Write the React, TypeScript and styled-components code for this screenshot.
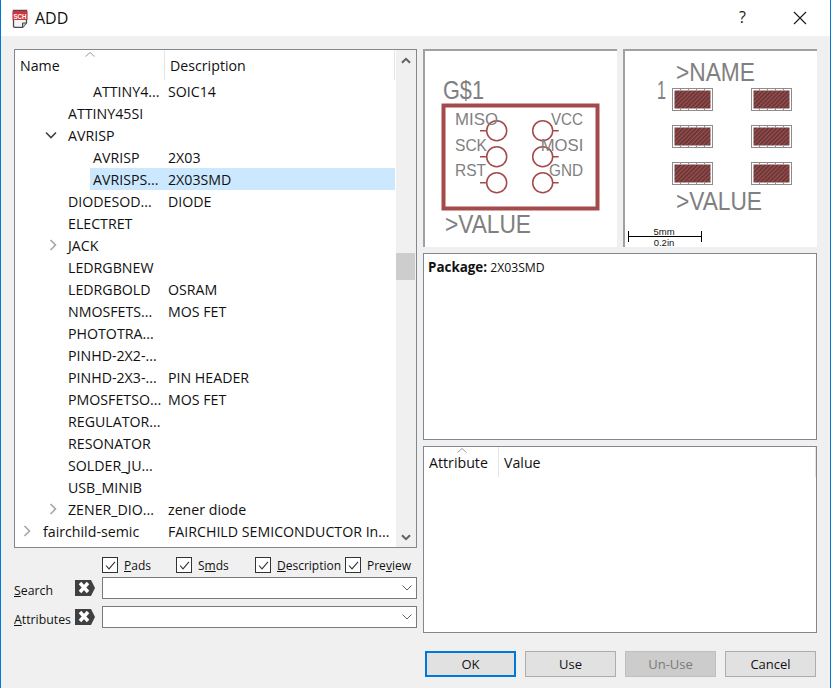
import styled, { createGlobalStyle } from "styled-components";

const GlobalStyle = createGlobalStyle`
  html, body {
    margin: 0;
    padding: 0;
    background: #ffffff;
  }
  * {
    box-sizing: border-box;
  }
`;

const uiFont = `"Open Sans", "Liberation Sans", sans-serif`;
const cadFont = `"Liberation Sans", sans-serif`;

interface TreeItem {
  name: string;
  description?: string;
  depth: number;
  arrow?: "open" | "closed";
  selected?: boolean;
}

const treeItems: TreeItem[] = [
  { name: "ATTINY4...", description: "SOIC14", depth: 2 },
  { name: "ATTINY45SI", depth: 1 },
  { name: "AVRISP", depth: 1, arrow: "open" },
  { name: "AVRISP", description: "2X03", depth: 2 },
  { name: "AVRISPS...", description: "2X03SMD", depth: 2, selected: true },
  { name: "DIODESOD...", description: "DIODE", depth: 1 },
  { name: "ELECTRET", depth: 1 },
  { name: "JACK", depth: 1, arrow: "closed" },
  { name: "LEDRGBNEW", depth: 1 },
  { name: "LEDRGBOLD", description: "OSRAM", depth: 1 },
  { name: "NMOSFETS...", description: "MOS FET", depth: 1 },
  { name: "PHOTOTRA...", depth: 1 },
  { name: "PINHD-2X2-...", depth: 1 },
  { name: "PINHD-2X3-...", description: "PIN HEADER", depth: 1 },
  { name: "PMOSFETSO...", description: "MOS FET", depth: 1 },
  { name: "REGULATOR...", depth: 1 },
  { name: "RESONATOR", depth: 1 },
  { name: "SOLDER_JU...", depth: 1 },
  { name: "USB_MINIB", depth: 1 },
  { name: "ZENER_DIO...", description: "zener diode", depth: 1, arrow: "closed" },
  { name: "fairchild-semic", description: "FAIRCHILD SEMICONDUCTOR In...", depth: 0, arrow: "closed" },
];

const filters = [
  { before: "", key: "P", after: "ads", width: 74 },
  { before: "S", key: "m", after: "ds", width: 79 },
  { before: "", key: "D", after: "escription", width: 90 },
  { before: "Pre", key: "v", after: "iew", width: 70 },
];

const padRows = [88.5, 125.5, 162.5];
const padCols = [672.5, 751.5];
const pinRows = [130.7, 156.7, 182.7];

function AppIcon() {
  return (
    <svg width="16" height="20" viewBox="0 0 16 20">
      <path d="M1.5 2.5 H14.5 V15 L10.5 19.5 H2.5 L1.5 18.5 Z" fill="#f4f4f4" stroke="#4a4a4a" strokeWidth="1.3" />
      <path d="M10.5 19.5 V15 H14.5" fill="#bdbdbd" stroke="#4a4a4a" strokeWidth="1" />
      <rect x="0.5" y="3" width="15" height="9" fill="#d0343a" />
      <IconLabel x="8" y="10.5" textAnchor="middle" textLength="13" lengthAdjust="spacingAndGlyphs">
        SCH
      </IconLabel>
    </svg>
  );
}

function Chevron({ open }: { open: boolean }) {
  return open ? (
    <svg width="12" height="8" viewBox="0 0 12 8">
      <path d="M1 1.5 L6 6.5 L11 1.5" fill="none" stroke="#404040" strokeWidth="1.6" />
    </svg>
  ) : (
    <svg width="8" height="12" viewBox="0 0 8 12">
      <path d="M1.5 1 L6.5 6 L1.5 11" fill="none" stroke="#a6a6a6" strokeWidth="1.6" />
    </svg>
  );
}

function ScrollArrow({ down }: { down?: boolean }) {
  return (
    <svg width="10" height="7" viewBox="0 0 10 7">
      <path
        d={down ? "M1 1.2 L5 5.2 L9 1.2" : "M1 5.8 L5 1.8 L9 5.8"}
        fill="none"
        stroke="#606060"
        strokeWidth="2"
      />
    </svg>
  );
}

function SortCaret() {
  return (
    <svg width="10" height="5" viewBox="0 0 10 5">
      <path d="M0.5 4.5 L5 0.5 L9.5 4.5" fill="none" stroke="#9a9a9a" strokeWidth="1" />
    </svg>
  );
}

function ComboArrow() {
  return (
    <svg width="10" height="6" viewBox="0 0 10 6">
      <path d="M0.5 0.5 L5 5 L9.5 0.5" fill="none" stroke="#606060" strokeWidth="1" />
    </svg>
  );
}

function ClearIcon() {
  return (
    <svg width="20" height="16" viewBox="0 0 20 16">
      <path d="M0 0 H16 L20 8 L16 16 H0 Z" fill="#404040" />
      <path d="M5 3 L13 12 M13 3 L5 12" stroke="#ffffff" strokeWidth="3.4" />
    </svg>
  );
}

function SymbolDrawing() {
  return (
    <PreviewSvg viewBox="425 51 192 196">
      <CadText x="443" y="99" fontSize="25" textLength="41" lengthAdjust="spacingAndGlyphs">G$1</CadText>
      <rect x="443.5" y="105.5" width="154" height="103" fill="none" stroke="#a54a4a" strokeWidth="4" />
      {pinRows.map((y) => (
        <g key={y} fill="none" stroke="#a54a4a" strokeWidth="1.5">
          <circle cx="496.7" cy={y} r="10" />
          <circle cx="542.7" cy={y} r="10" />
          <path d={`M480 ${y} H486.7 M552.7 ${y} H558.7`} />
        </g>
      ))}
      <CadText x="455" y="125" fontSize="17" textLength="43" lengthAdjust="spacingAndGlyphs">MISO</CadText>
      <CadText x="551" y="125" fontSize="17" textLength="32" lengthAdjust="spacingAndGlyphs">VCC</CadText>
      <CadText x="455" y="151" fontSize="17" textLength="32" lengthAdjust="spacingAndGlyphs">SCK</CadText>
      <CadText x="540.7" y="151" fontSize="17" textLength="42.6" lengthAdjust="spacingAndGlyphs">MOSI</CadText>
      <CadText x="455" y="176" fontSize="17" textLength="31" lengthAdjust="spacingAndGlyphs">RST</CadText>
      <CadText x="549" y="176" fontSize="17" textLength="34" lengthAdjust="spacingAndGlyphs">GND</CadText>
      <CadText x="445" y="233" fontSize="25" textLength="86" lengthAdjust="spacingAndGlyphs">&gt;VALUE</CadText>
    </PreviewSvg>
  );
}

function PackageDrawing() {
  return (
    <PreviewSvg viewBox="625 51 192 196">
      <defs>
        <pattern id="hatch" width="3" height="3" patternUnits="userSpaceOnUse" patternTransform="rotate(45)">
          <rect width="3" height="3" fill="#a54a4a" />
          <rect width="1.6" height="3" fill="#5a3838" />
        </pattern>
      </defs>
      <CadText x="676" y="81" fontSize="25" textLength="79" lengthAdjust="spacingAndGlyphs">&gt;NAME</CadText>
      <CadText x="657" y="99" fontSize="25" textLength="9" lengthAdjust="spacingAndGlyphs">1</CadText>
      {padRows.map((y) =>
        padCols.map((x) => (
          <g key={`${x}-${y}`}>
            <rect x={x} y={y} width="40" height="22" fill="#ffffff" stroke="#8c8c8c" />
            <rect x={x + 2} y={y + 2} width="36" height="18" fill="url(#hatch)" />
            <path
              d={`M${x + 8} ${y} v2 M${x + 16} ${y} v2 M${x + 24} ${y} v2 M${x + 32} ${y} v2 M${x + 8} ${y + 20} v2 M${x + 16} ${y + 20} v2 M${x + 24} ${y + 20} v2 M${x + 32} ${y + 20} v2`}
              stroke="#8c8c8c"
              strokeWidth="1"
            />
          </g>
        ))
      )}
      <CadText x="676" y="209.5" fontSize="25" textLength="86" lengthAdjust="spacingAndGlyphs">&gt;VALUE</CadText>
      <path d="M628.5 231 V242 M701.5 231 V242 M628.5 236.5 H701.5" fill="none" stroke="#000000" strokeWidth="1" />
      <ScaleText x="664" y="234.5" textAnchor="middle">5mm</ScaleText>
      <ScaleText x="664" y="245.5" textAnchor="middle">0.2in</ScaleText>
    </PreviewSvg>
  );
}

export default function App() {
  return (
    <Window>
      <GlobalStyle />
      <TitleBar>
        <TitleGroup>
          <AppIcon />
          <TitleText>ADD</TitleText>
        </TitleGroup>
        <HelpMark>?</HelpMark>
        <CloseMark width="14" height="14" viewBox="0 0 14 14">
          <path d="M1 1 L13 13 M13 1 L1 13" stroke="#1a1a1a" strokeWidth="1.1" fill="none" />
        </CloseMark>
      </TitleBar>
      <Content>
        <Columns>
          <LeftColumn>
            <TreePanel>
              <TreeMain>
                <TreeHeader>
                  <NameHead>
                    Name
                    <SortMark $left={70} $top={2}>
                      <SortCaret />
                    </SortMark>
                  </NameHead>
                  <DescHead>Description</DescHead>
                </TreeHeader>
                {treeItems.map((item, i) => (
                  <TreeRow key={i}>
                    <Indent $depth={item.depth}>
                      {item.arrow && <Chevron open={item.arrow === "open"} />}
                    </Indent>
                    <RowBody $selected={item.selected}>
                      <NameCell $depth={item.depth}>{item.name}</NameCell>
                      <span>{item.description}</span>
                    </RowBody>
                  </TreeRow>
                ))}
              </TreeMain>
              <ScrollBar>
                <ScrollButton>
                  <ScrollArrow />
                </ScrollButton>
                <ScrollThumb />
                <ScrollButton>
                  <ScrollArrow down />
                </ScrollButton>
              </ScrollBar>
            </TreePanel>
            <FilterRow>
              {filters.map((f) => (
                <FilterItem key={f.after} $width={f.width}>
                  <CheckBox>
                    <svg width="13" height="13" viewBox="0 0 13 13">
                      <path d="M2 6.5 L5 9.8 L11 2.8" fill="none" stroke="#333333" strokeWidth="1.1" />
                    </svg>
                  </CheckBox>
                  <FilterLabel>
                    {f.before}
                    <u>{f.key}</u>
                    {f.after}
                  </FilterLabel>
                </FilterItem>
              ))}
            </FilterRow>
            <FieldRow>
              <FieldLabel>
                <u>S</u>earch
              </FieldLabel>
              <ClearIcon />
              <ComboBox>
                <ComboArrow />
              </ComboBox>
            </FieldRow>
            <FieldRow>
              <FieldLabel>
                <u>A</u>ttributes
              </FieldLabel>
              <ClearIcon />
              <ComboBox>
                <ComboArrow />
              </ComboBox>
            </FieldRow>
          </LeftColumn>
          <RightColumn>
            <PreviewRow>
              <PreviewPanel>
                <SymbolDrawing />
              </PreviewPanel>
              <PreviewPanel>
                <PackageDrawing />
              </PreviewPanel>
            </PreviewRow>
            <InfoBox>
              <InfoLine>
                <InfoKey>Package:</InfoKey> 2X03SMD
              </InfoLine>
            </InfoBox>
            <AttrBox>
              <AttrHeader>
                <AttrName>
                  Attribute
                  <SortMark $left={33} $top={1}>
                    <SortCaret />
                  </SortMark>
                </AttrName>
                <AttrValue>Value</AttrValue>
              </AttrHeader>
            </AttrBox>
          </RightColumn>
        </Columns>
        <ButtonRow>
          <DialogButton $primary>OK</DialogButton>
          <DialogButton>Use</DialogButton>
          <DialogButton disabled>Un-Use</DialogButton>
          <DialogButton>Cancel</DialogButton>
        </ButtonRow>
      </Content>
    </Window>
  );
}

const Window = styled.div`
  width: 831px;
  height: 688px;
  display: flex;
  flex-direction: column;
  border-left: 1px solid #0078d7;
  border-right: 1px solid #0078d7;
  font-family: ${uiFont};
  font-size: 14.2px;
  color: #111111;
  overflow: hidden;
`;

const TitleBar = styled.div`
  height: 36px;
  flex: none;
  display: flex;
  align-items: center;
  background: #ffffff;
  padding: 0 23px 0 11px;
`;

const TitleGroup = styled.div`
  display: flex;
  align-items: center;
  gap: 7px;
  flex: 1;
`;

const TitleText = styled.span`
  font-size: 16px;
`;

const HelpMark = styled.span`
  font-size: 16px;
  margin-right: 47px;
  margin-bottom: 2px;
  color: #1a1a1a;
`;

const CloseMark = styled.svg`
  display: block;
`;

const IconLabel = styled.text`
  font-family: ${cadFont};
  font-size: 7px;
  font-weight: 700;
  fill: #ffffff;
`;

const Content = styled.div`
  flex: 1;
  background: #f0f0f0;
  padding: 13px 13px 0 13px;
`;

const Columns = styled.div`
  display: grid;
  grid-template-columns: 403px 394px;
  column-gap: 6px;
`;

const LeftColumn = styled.div`
  display: flex;
  flex-direction: column;
`;

const RightColumn = styled.div`
  display: flex;
  flex-direction: column;
  gap: 6px;
`;

const TreePanel = styled.div`
  height: 499px;
  display: flex;
  background: #ffffff;
  border: 1px solid #828790;
`;

const TreeMain = styled.div`
  flex: 1;
  min-width: 0;
  padding-right: 1px;
`;

const TreeHeader = styled.div`
  height: 30px;
  display: flex;
  border-right: 1px solid #e5e5e5;
`;

const NameHead = styled.div`
  position: relative;
  width: 150px;
  padding: 6px 0 0 5px;
  border-right: 1px solid #e5e5e5;
`;

const DescHead = styled.div`
  padding: 6px 0 0 5px;
`;

const SortMark = styled.span<{ $left: number; $top: number }>`
  position: absolute;
  top: ${(p) => p.$top}px;
  left: ${(p) => p.$left}px;
  line-height: 0;
`;

const TreeRow = styled.div`
  height: 22px;
  display: flex;
`;

const Indent = styled.div<{ $depth: number }>`
  flex: none;
  width: ${(p) => 25 + p.$depth * 25}px;
  display: flex;
  align-items: center;
  justify-content: flex-end;
  padding-right: ${(p) => (p.$depth === 0 ? 9 : 8)}px;
`;

const RowBody = styled.div<{ $selected?: boolean }>`
  flex: 1;
  display: flex;
  align-items: center;
  white-space: nowrap;
  padding-left: 3px;
  background: ${(p) => (p.$selected ? "#cce8ff" : "transparent")};
`;

const NameCell = styled.span<{ $depth: number }>`
  flex: none;
  width: ${(p) => 125 - p.$depth * 25}px;
`;

const ScrollBar = styled.div`
  flex: none;
  width: 20px;
  display: flex;
  flex-direction: column;
  background: #f0f0f0;
  position: relative;
`;

const ScrollButton = styled.div`
  height: 20px;
  flex: none;
  display: flex;
  align-items: center;
  justify-content: center;
  margin: auto 0 0;
  &:first-child {
    margin: 0 0 auto;
  }
`;

const ScrollThumb = styled.div`
  position: absolute;
  left: 0;
  right: 1px;
  top: 203px;
  height: 27px;
  background: #cdcdcd;
`;

const FilterRow = styled.div`
  display: flex;
  padding: 9px 0 0 88px;
  height: 29px;
`;

const FilterItem = styled.label<{ $width: number }>`
  display: flex;
  align-items: center;
  gap: 6px;
  width: ${(p) => p.$width}px;
  height: 16px;
  white-space: nowrap;
`;

const CheckBox = styled.span`
  flex: none;
  width: 16px;
  height: 16px;
  display: flex;
  align-items: center;
  justify-content: center;
  background: #ffffff;
  border: 1px solid #333333;
`;

const FilterLabel = styled.span`
  font-size: 12px;
`;

const FieldRow = styled.div`
  display: flex;
  align-items: center;
  height: 22px;
  margin-bottom: 7px;
  &:last-child {
    margin-bottom: 0;
  }
`;

const FieldLabel = styled.span`
  flex: none;
  width: 61px;
  font-size: 12.3px;
  padding-top: 4px;
`;

const ComboBox = styled.div`
  margin-left: 7px;
  flex: 1;
  height: 22px;
  display: flex;
  align-items: center;
  justify-content: flex-end;
  padding-right: 4px;
  background: #ffffff;
  border: 1px solid #7a7a7a;
`;

const PreviewRow = styled.div`
  display: flex;
  gap: 6px;
`;

const PreviewPanel = styled.div`
  width: 194px;
  height: 198px;
  background: #ffffff;
  border-top: 2px solid #a0a0a0;
  border-left: 2px solid #a0a0a0;
  overflow: hidden;
`;

const PreviewSvg = styled.svg`
  display: block;
  width: 192px;
  height: 196px;
`;

const CadText = styled.text`
  font-family: ${cadFont};
  fill: #808080;
`;

const ScaleText = styled.text`
  font-family: ${cadFont};
  font-size: 9.5px;
  fill: #111111;
`;

const InfoBox = styled.div`
  height: 187px;
  background: #ffffff;
  border: 1px solid #828790;
  padding: 4px;
`;

const InfoLine = styled.div`
  font-size: 12.2px;
  line-height: 18px;
`;

const InfoKey = styled.span`
  font-size: 13.4px;
  font-weight: 700;
`;

const AttrBox = styled.div`
  height: 187px;
  background: #ffffff;
  border: 1px solid #828790;
`;

const AttrHeader = styled.div`
  height: 30px;
  display: flex;
  border-right: 1px solid #e5e5e5;
`;

const AttrName = styled.div`
  position: relative;
  width: 75px;
  padding: 6px 0 0 5px;
  border-right: 1px solid #e5e5e5;
`;

const AttrValue = styled.div`
  padding: 6px 0 0 5px;
`;

const ButtonRow = styled.div`
  display: flex;
  justify-content: flex-end;
  gap: 9px;
  margin-top: 18px;
  padding-right: 1px;
`;

const DialogButton = styled.button<{ $primary?: boolean }>`
  width: 91px;
  height: 26px;
  padding: 0;
  font-family: ${uiFont};
  font-size: 13px;
  color: #111111;
  background: #e1e1e1;
  border: ${(p) => (p.$primary ? "2px solid #0078d7" : "1px solid #adadad")};
  &:disabled {
    background: #cccccc;
    color: #7a7a7a;
    border-color: #bfbfbf;
  }
`;
